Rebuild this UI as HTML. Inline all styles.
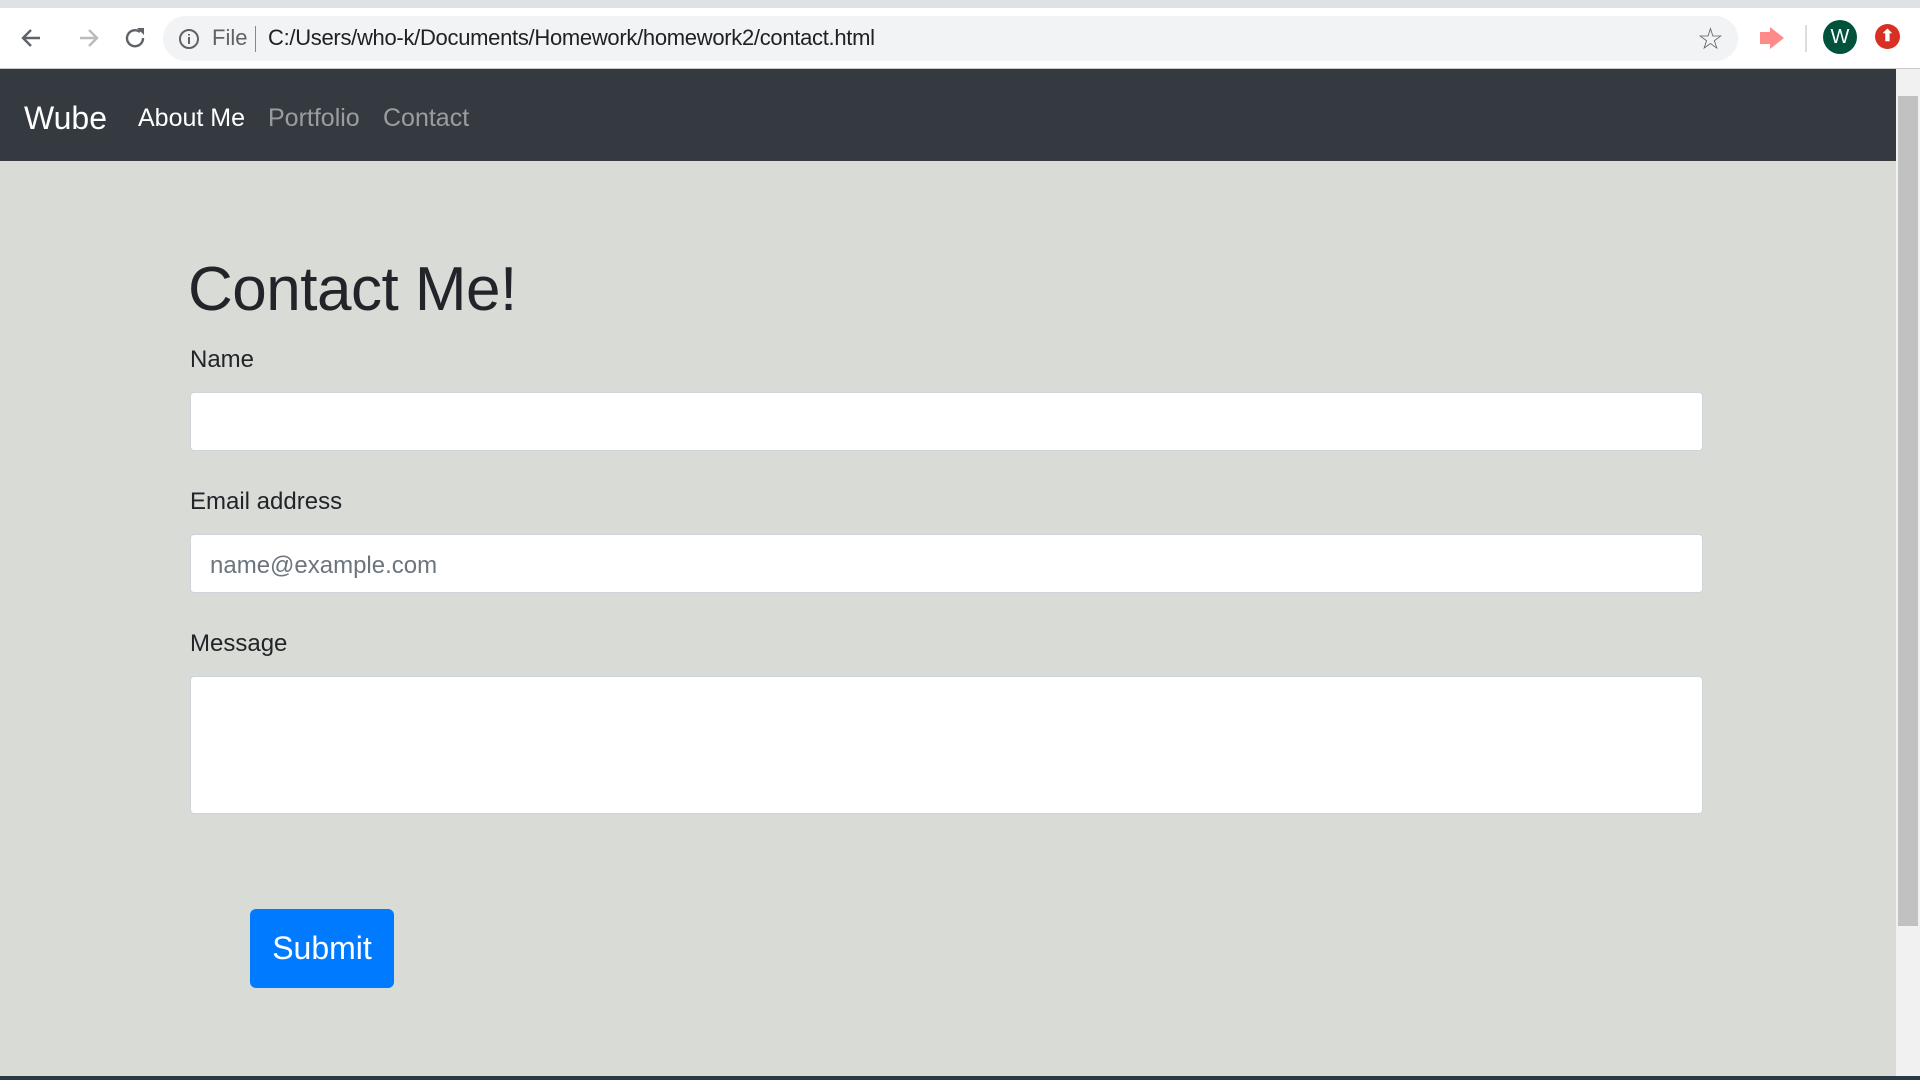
<!DOCTYPE html>
<html><head><meta charset="utf-8"><style>
*{box-sizing:border-box;margin:0;padding:0}
body{width:1920px;height:1080px;overflow:hidden;background:#d9dbd6;font-family:"Liberation Sans",sans-serif;position:relative}
.abs{position:absolute}
.tabs{left:0;top:0;width:1920px;height:8px;background:#dee1e6}
.toolbar{left:0;top:8px;width:1920px;height:61px;background:#fff;border-bottom:1px solid #ccc}
.omni{left:163px;top:16px;width:1575px;height:45px;background:#f1f3f4;border-radius:23px}
.url{left:268px;top:25px;font-size:22px;color:#202124;letter-spacing:-0.3px}
.file{left:212px;top:25px;font-size:22px;color:#5f6368}
.nav{left:0;top:69px;width:1896px;height:92px;background:#343a40}
.nav span{position:absolute;top:35px;font-size:25px;color:rgba(255,255,255,.5)}
.lbl{left:190px;font-size:24px;color:#212529}
.inp{left:190px;width:1513px;background:#fff;border:1px solid #ced4da;border-radius:4px}
.btn{left:250px;top:909px;width:144px;height:79px;background:#007bff;border-radius:6px;color:#fff;font-size:32px;text-align:center;line-height:79px}
.sb{left:1896px;top:69px;width:24px;height:1007px;background:#f1f1f1}
.thumb{left:1898px;top:96px;width:20px;height:830px;background:#c1c1c1}
</style></head><body>
<div class="abs tabs"></div>
<div class="abs toolbar"></div>
<svg class="abs" style="left:20px;top:25px" width="150" height="26" viewBox="0 0 150 26">
<path d="M20 13H4M11 5L3 13l8 8" stroke="#5f6368" stroke-width="2.4" fill="none"/>
<path d="M60 13h16M69 5l8 8-8 8" stroke="#bbb" stroke-width="2.4" fill="none"/>
<path d="M120 7a8 8 0 1 0 3 6" stroke="#5f6368" stroke-width="2.4" fill="none"/><path d="M117 3l7 0 0 7z" fill="#5f6368"/>
</svg>
<div class="abs omni"></div>
<svg class="abs" style="left:178px;top:28px" width="22" height="22"><circle cx="11" cy="11" r="9" stroke="#5f6368" stroke-width="2" fill="none"/><path d="M11 9v7M11 6v1.5" stroke="#5f6368" stroke-width="2"/></svg>
<div class="abs file">File</div>
<div class="abs" style="left:255px;top:26px;width:1px;height:26px;background:#888"></div>
<div class="abs url">C:/Users/who-k/Documents/Homework/homework2/contact.html</div>
<div class="abs" style="left:1697px;top:22px;font-size:30px;color:#5f6368">☆</div>
<svg class="abs" style="left:1758px;top:26px" width="28" height="24"><path d="M2 6h10l0-5 14 11-14 11 0-5H2z" fill="#ff8a8a"/></svg>
<div class="abs" style="left:1805px;top:25px;width:2px;height:27px;background:#ddd"></div>
<div class="abs" style="left:1823px;top:20px;width:34px;height:34px;border-radius:50%;background:#00523c;color:#fff;font-size:20px;text-align:center;line-height:34px">W</div>
<div class="abs" style="left:1875px;top:24px;width:25px;height:25px;border-radius:50%;background:#d93025;color:#fff;font-size:16px;text-align:center;line-height:25px;font-weight:bold">⬆</div>
<div class="abs nav">
<span style="left:24px;top:31px;font-size:32px;color:#fff">Wube</span>
<span style="left:138px;color:#fff">About Me</span>
<span style="left:268px">Portfolio</span>
<span style="left:383px">Contact</span>
</div>
<div class="abs" style="left:188px;top:254px;font-size:62px;color:#212529;letter-spacing:-0.5px">Contact Me!</div>
<div class="abs lbl" style="top:346px">Name</div>
<div class="abs inp" style="top:392px;height:59px"></div>
<div class="abs lbl" style="top:488px">Email address</div>
<div class="abs inp" style="top:534px;height:59px"><span style="position:absolute;left:19px;top:17px;font-size:24px;color:#6c757d">name@example.com</span></div>
<div class="abs lbl" style="top:630px">Message</div>
<div class="abs inp" style="top:676px;height:138px"></div>
<div class="abs btn">Submit</div>
<div class="abs sb"></div>
<div class="abs thumb"></div>
<div class="abs" style="left:0;top:1076px;width:1920px;height:4px;background:#2a3a44"></div>
</body></html>
